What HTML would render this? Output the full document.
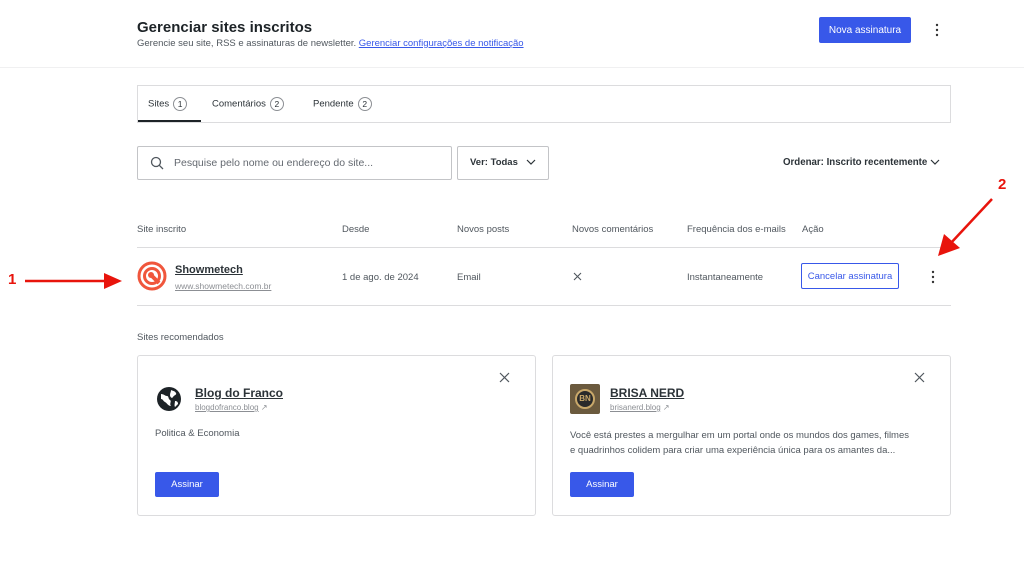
<!DOCTYPE html>
<html><head><meta charset="utf-8"><style>
*{margin:0;padding:0;box-sizing:border-box}
body{width:1024px;height:575px;background:#fff;font-family:"Liberation Sans",sans-serif;color:#2c3338;position:relative;overflow:hidden;font-size:9.5px}
.a{position:absolute;white-space:nowrap}
.g{color:#50575e}
.btn{position:absolute;background:#3858e9;color:#fff;border-radius:2px;display:flex;align-items:center;justify-content:center;font-size:9.5px}
.badge{display:inline-block;width:14px;height:14px;border:1px solid #8c8f94;border-radius:50%;text-align:center;font-size:8.5px;line-height:12px;margin-left:4px;vertical-align:middle}
.card{position:absolute;border:1px solid #dcdcde;border-radius:3px;background:#fff}
u{text-decoration:underline}
</style></head><body>
<div class="a" style="left:137px;top:19px;font-size:15px;font-weight:bold;color:#1d2327">Gerenciar sites inscritos</div>
<div class="a g" style="left:137px;top:38px;font-size:9.5px">Gerencie seu site, RSS e assinaturas de newsletter. <u style="color:#3858e9">Gerenciar configurações de notificação</u></div>
<div class="btn" style="left:819px;top:17px;width:92px;height:26px;font-size:10px">Nova assinatura</div>
<svg class="a" style="left:934px;top:23px" width="6" height="14"><circle cx="3" cy="2" r="1.2" fill="#333"/><circle cx="3" cy="7" r="1.2" fill="#333"/><circle cx="3" cy="12" r="1.2" fill="#333"/></svg>
<div class="a" style="left:0;top:67px;width:1024px;height:1px;background:#f0f0f1"></div>

<div class="card" style="left:137px;top:85px;width:814px;height:38px;border-radius:0"></div>
<div class="a" style="left:148px;top:97px;font-size:9.5px">Sites<span class="badge">1</span></div>
<div class="a" style="left:138px;top:120px;width:63px;height:2px;background:#1d2327"></div>
<div class="a" style="left:212px;top:97px;font-size:9.5px">Comentários<span class="badge">2</span></div>
<div class="a" style="left:313px;top:97px;font-size:9.5px">Pendente<span class="badge">2</span></div>

<div class="card" style="left:137px;top:146px;width:315px;height:34px;border-color:#c3c4c7;border-radius:2px"></div>
<svg class="a" style="left:150px;top:156px" width="14" height="14" viewBox="0 0 14 14"><circle cx="6" cy="6" r="4.5" fill="none" stroke="#50575e" stroke-width="1.3"/><path d="M9.3 9.3L13 13" stroke="#50575e" stroke-width="1.3"/></svg>
<div class="a g" style="left:174px;top:157px;font-size:10.5px;color:#646970">Pesquise pelo nome ou endereço do site...</div>
<div class="card" style="left:457px;top:146px;width:92px;height:34px;border-color:#c3c4c7;border-radius:2px"></div>
<div class="a" style="left:470px;top:157px;font-size:9.5px;font-weight:bold">Ver: Todas</div>
<svg class="a" style="left:526px;top:158px" width="10" height="8"><path d="M1 2l4 4 4-4" fill="none" stroke="#2c3338" stroke-width="1.2"/></svg>
<div class="a" style="left:783px;top:157px;font-size:9.7px;font-weight:bold">Ordenar: Inscrito recentemente</div>
<svg class="a" style="left:930px;top:158px" width="10" height="8"><path d="M1 2l4 4 4-4" fill="none" stroke="#2c3338" stroke-width="1.2"/></svg>

<div class="a g" style="left:137px;top:224px">Site inscrito</div>
<div class="a g" style="left:342px;top:224px">Desde</div>
<div class="a g" style="left:457px;top:224px">Novos posts</div>
<div class="a g" style="left:572px;top:224px">Novos comentários</div>
<div class="a g" style="left:687px;top:224px">Frequência dos e-mails</div>
<div class="a g" style="left:802px;top:224px">Ação</div>
<div class="a" style="left:137px;top:247px;width:814px;height:1px;background:#dcdcde"></div>

<svg class="a" style="left:137px;top:261px" width="30" height="30" viewBox="0 0 30 30"><circle cx="15" cy="15" r="13" fill="none" stroke="#f0563c" stroke-width="3"/><circle cx="15" cy="15" r="7.5" fill="none" stroke="#f0563c" stroke-width="3"/><circle cx="14" cy="14" r="3" fill="#f0563c"/><path d="M15 15l7 7" stroke="#f0563c" stroke-width="4"/></svg>
<div class="a" style="left:175px;top:264px;font-size:11px;font-weight:bold"><u>Showmetech</u></div>
<div class="a" style="left:175px;top:281px;font-size:8.5px;color:#8c8f94"><u>www.showmetech.com.br</u></div>
<div class="a g" style="left:342px;top:272px">1 de ago. de 2024</div>
<div class="a g" style="left:457px;top:272px">Email</div>
<svg class="a" style="left:573px;top:272px" width="9" height="9"><path d="M1 1l7 7M8 1l-7 7" stroke="#50575e" stroke-width="1.1"/></svg>
<div class="a g" style="left:687px;top:272px">Instantaneamente</div>
<div class="a" style="left:801px;top:263px;width:98px;height:26px;border:1px solid #3858e9;border-radius:2px;color:#3858e9;display:flex;align-items:center;justify-content:center;font-size:9.5px">Cancelar assinatura</div>
<svg class="a" style="left:930px;top:270px" width="6" height="14"><circle cx="3" cy="2" r="1.2" fill="#333"/><circle cx="3" cy="7" r="1.2" fill="#333"/><circle cx="3" cy="12" r="1.2" fill="#333"/></svg>
<div class="a" style="left:137px;top:305px;width:814px;height:1px;background:#dcdcde"></div>

<div class="a g" style="left:137px;top:332px">Sites recomendados</div>
<div class="card" style="left:137px;top:355px;width:399px;height:161px"></div>
<div class="card" style="left:552px;top:355px;width:399px;height:161px"></div>
<svg class="a" style="left:499px;top:372px" width="11" height="11"><path d="M1 1l9 9M10 1l-9 9" stroke="#50575e" stroke-width="1.2"/></svg>
<svg class="a" style="left:914px;top:372px" width="11" height="11"><path d="M1 1l9 9M10 1l-9 9" stroke="#50575e" stroke-width="1.2"/></svg>
<svg class="a" style="left:156px;top:386px" width="26" height="26" viewBox="0 0 26 26"><circle cx="13" cy="13" r="12" fill="#1d2327"/><path d="M5 8c3 0 4 2 6 2s1 3 3 4-1 4 1 6c-3 0-4-3-6-4s-2-3-4-3zM15 4c2 1 4 1 5 3s-2 2-3 4-3 0-3-2 1-3 1-5zM19 15c2 0 3 1 3 3l-3 3c-1-2 0-4 0-6z" fill="#fff"/></svg>
<div class="a" style="left:195px;top:386px;font-size:12px;font-weight:bold"><u>Blog do Franco</u></div>
<div class="a" style="left:195px;top:403px;font-size:8px;color:#8c8f94"><u>blogdofranco.blog</u> ↗</div>
<div class="a g" style="left:155px;top:428px">Politica &amp; Economia</div>
<div class="btn" style="left:155px;top:472px;width:64px;height:25px">Assinar</div>

<div class="a" style="left:570px;top:384px;width:30px;height:30px;background:#6b5a3e;border-radius:2px"><div style="margin:5px;width:20px;height:20px;border-radius:50%;background:#2a2a2a;border:2px solid #c9a86a;color:#c9a86a;font-size:8px;font-weight:bold;text-align:center;line-height:16px">BN</div></div>
<div class="a" style="left:610px;top:386px;font-size:12px;font-weight:bold"><u>BRISA NERD</u></div>
<div class="a" style="left:610px;top:403px;font-size:8px;color:#8c8f94"><u>brisanerd.blog</u> ↗</div>
<div class="a g" style="left:570px;top:428px;line-height:15px;font-size:9.5px">Você está prestes a mergulhar em um portal onde os mundos dos games, filmes<br>e quadrinhos colidem para criar uma experiência única para os amantes da...</div>
<div class="btn" style="left:570px;top:472px;width:64px;height:25px">Assinar</div>

<div class="a" style="left:8px;top:271px;font-size:15px;font-weight:bold;color:#e8140c">1</div>
<svg class="a" style="left:20px;top:270px" width="102" height="22"><path d="M5 11H95" stroke="#e8140c" stroke-width="2.5"/><path d="M84 3L102 11 84 19z" fill="#e8140c"/></svg>
<div class="a" style="left:998px;top:176px;font-size:15px;font-weight:bold;color:#e8140c">2</div>
<svg class="a" style="left:936px;top:196px" width="60" height="62"><path d="M56 3L14 48" stroke="#e8140c" stroke-width="2.5"/><path d="M2 60L8 38 24 52z" fill="#e8140c"/></svg>
</body></html>
